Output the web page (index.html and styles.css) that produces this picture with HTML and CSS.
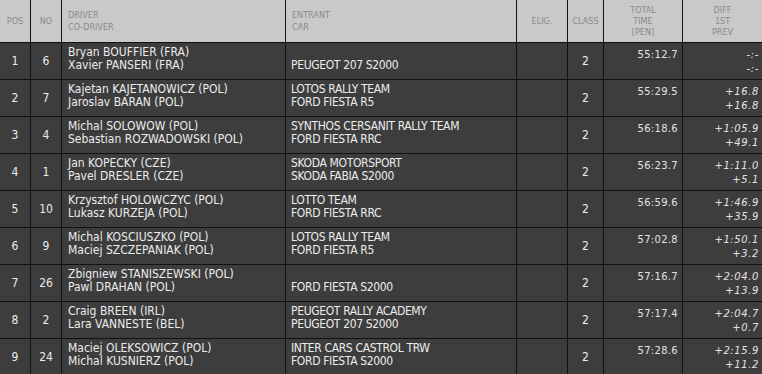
FILE: index.html
```html
<!DOCTYPE html>
<html>
<head>
<meta charset="utf-8">
<link rel="stylesheet" href="styles.css">
</head>
<body>
<div class="results">
  <div class="row head">
    <div class="c pos">POS</div>
    <div class="c no">NO</div>
    <div class="c name"><span>DRIVER</span><span>CO-DRIVER</span></div>
    <div class="c name"><span>ENTRANT</span><span>CAR</span></div>
    <div class="c mid">ELIG.</div>
    <div class="c mid">CLASS</div>
    <div class="c stack"><span>TOTAL</span><span>TIME</span><span>[PEN]</span></div>
    <div class="c stack"><span>DIFF</span><span>1ST</span><span>PREV</span></div>
  </div>

  <div class="row">
    <div class="c pos">1</div><div class="c no">6</div>
    <div class="c name"><span>Bryan BOUFFIER (FRA)</span><span>Xavier PANSERI (FRA)</span></div>
    <div class="c name ent"><span>&nbsp;</span><span>PEUGEOT 207 S2000</span></div>
    <div class="c elig"></div><div class="c cls">2</div>
    <div class="c time">55:12.7</div>
    <div class="c diff"><span>-:-</span><span>-:-</span></div>
  </div>

  <div class="row">
    <div class="c pos">2</div><div class="c no">7</div>
    <div class="c name"><span>Kajetan KAJETANOWICZ (POL)</span><span>Jaroslav BARAN (POL)</span></div>
    <div class="c name ent"><span>LOTOS RALLY TEAM</span><span>FORD FIESTA R5</span></div>
    <div class="c elig"></div><div class="c cls">2</div>
    <div class="c time">55:29.5</div>
    <div class="c diff"><span>+16.8</span><span>+16.8</span></div>
  </div>

  <div class="row">
    <div class="c pos">3</div><div class="c no">4</div>
    <div class="c name"><span>Michal SOLOWOW (POL)</span><span>Sebastian ROZWADOWSKI (POL)</span></div>
    <div class="c name ent"><span>SYNTHOS CERSANIT RALLY TEAM</span><span>FORD FIESTA RRC</span></div>
    <div class="c elig"></div><div class="c cls">2</div>
    <div class="c time">56:18.6</div>
    <div class="c diff"><span>+1:05.9</span><span>+49.1</span></div>
  </div>

  <div class="row">
    <div class="c pos">4</div><div class="c no">1</div>
    <div class="c name"><span>Jan KOPECKY (CZE)</span><span>Pavel DRESLER (CZE)</span></div>
    <div class="c name ent"><span>SKODA MOTORSPORT</span><span>SKODA FABIA S2000</span></div>
    <div class="c elig"></div><div class="c cls">2</div>
    <div class="c time">56:23.7</div>
    <div class="c diff"><span>+1:11.0</span><span>+5.1</span></div>
  </div>

  <div class="row">
    <div class="c pos">5</div><div class="c no">10</div>
    <div class="c name"><span>Krzysztof HOLOWCZYC (POL)</span><span>Lukasz KURZEJA (POL)</span></div>
    <div class="c name ent"><span>LOTTO TEAM</span><span>FORD FIESTA RRC</span></div>
    <div class="c elig"></div><div class="c cls">2</div>
    <div class="c time">56:59.6</div>
    <div class="c diff"><span>+1:46.9</span><span>+35.9</span></div>
  </div>

  <div class="row">
    <div class="c pos">6</div><div class="c no">9</div>
    <div class="c name"><span>Michal KOSCIUSZKO (POL)</span><span>Maciej SZCZEPANIAK (POL)</span></div>
    <div class="c name ent"><span>LOTOS RALLY TEAM</span><span>FORD FIESTA R5</span></div>
    <div class="c elig"></div><div class="c cls">2</div>
    <div class="c time">57:02.8</div>
    <div class="c diff"><span>+1:50.1</span><span>+3.2</span></div>
  </div>

  <div class="row">
    <div class="c pos">7</div><div class="c no">26</div>
    <div class="c name"><span>Zbigniew STANISZEWSKI (POL)</span><span>Pawl DRAHAN (POL)</span></div>
    <div class="c name ent"><span>&nbsp;</span><span>FORD FIESTA S2000</span></div>
    <div class="c elig"></div><div class="c cls">2</div>
    <div class="c time">57:16.7</div>
    <div class="c diff"><span>+2:04.0</span><span>+13.9</span></div>
  </div>

  <div class="row">
    <div class="c pos">8</div><div class="c no">2</div>
    <div class="c name"><span>Craig BREEN (IRL)</span><span>Lara VANNESTE (BEL)</span></div>
    <div class="c name ent"><span>PEUGEOT RALLY ACADEMY</span><span>PEUGEOT 207 S2000</span></div>
    <div class="c elig"></div><div class="c cls">2</div>
    <div class="c time">57:17.4</div>
    <div class="c diff"><span>+2:04.7</span><span>+0.7</span></div>
  </div>

  <div class="row">
    <div class="c pos">9</div><div class="c no">24</div>
    <div class="c name"><span>Maciej OLEKSOWICZ (POL)</span><span>Michal KUSNIERZ (POL)</span></div>
    <div class="c name ent"><span>INTER CARS CASTROL TRW</span><span>FORD FIESTA S2000</span></div>
    <div class="c elig"></div><div class="c cls">2</div>
    <div class="c time">57:28.6</div>
    <div class="c diff"><span>+2:15.9</span><span>+11.2</span></div>
  </div>
</div>
</body>
</html>
```

FILE: styles.css
```css
* { box-sizing: border-box; }
html, body { margin: 0; padding: 0; background: #3c3c3c; }
body {
  font-family: "DejaVu Sans Condensed", "Liberation Sans", sans-serif;
  font-size: 12px;
  color: #ececec;
  overflow: hidden;
}
.results { width: 762px; }
.row {
  display: grid;
  grid-template-columns: 31px 31px 224px 231px 51px 36px 79px 1fr;
  height: 37px;
  border-bottom: 1px solid #121212;
  background: #3d3d3d;
}
.c {
  border-right: 1px solid #121212;
  min-width: 0;
  overflow: hidden;
  white-space: nowrap;
}
.c:last-child { border-right: none; }

.pos, .no, .cls {
  display: flex;
  align-items: center;
  justify-content: center;
}
.name {
  display: flex;
  flex-direction: column;
  padding: 3px 0 0 6px;
  line-height: 13px;
}
.ent {
  padding-left: 5px;
  letter-spacing: -0.35px;
}
.time {
  font-family: "DejaVu Sans", sans-serif;
  font-size: 10px;
  letter-spacing: 0.3px;
  text-align: right;
  padding: 5px 4px 0 0;
  line-height: 13px;
  color: #e2e2e2;
}
.diff {
  font-family: "DejaVu Sans", sans-serif;
  font-size: 10px;
  letter-spacing: 0.6px;
  font-style: italic;
  display: flex;
  flex-direction: column;
  align-items: flex-end;
  padding: 5px 3px 0 0;
  line-height: 14px;
  color: #e2e2e2;
}

.head {
  height: 43px;
  background: #c9c9c9;
  color: #8a8a8a;
  font-size: 9px;
}
.head .c {
  display: flex;
  flex-direction: column;
  justify-content: center;
}
.head .pos, .head .no, .head .mid, .head .stack { align-items: center; }
.head .name {
  padding: 0 0 0 6px;
  line-height: 12px;
  letter-spacing: 0;
}
.head .stack { line-height: 11px; }
```
